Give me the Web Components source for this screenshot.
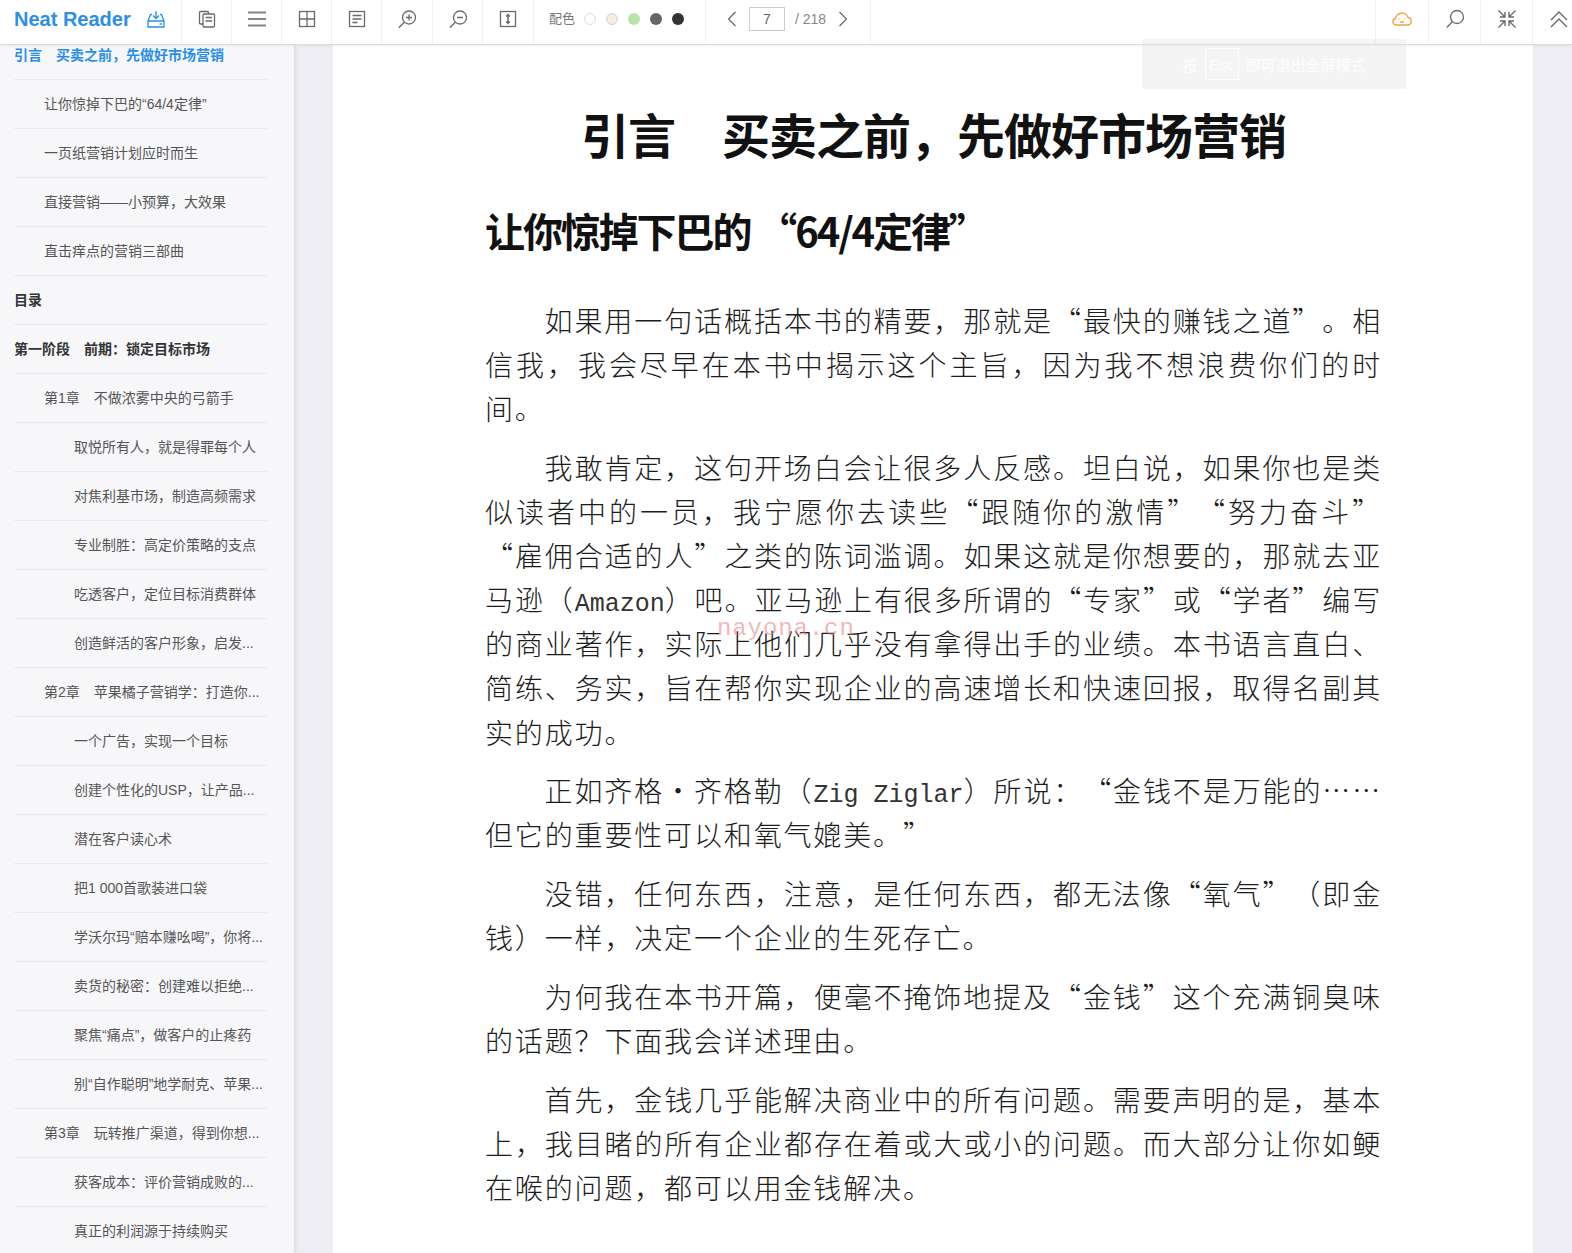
<!DOCTYPE html>
<html lang="zh-CN">
<head>
<meta charset="utf-8">
<title>Neat Reader</title>
<style>
  html, body { margin: 0; height: 100%; overflow: hidden; background: #eeedf3; }
</style>
</head>
<body>
<reader-app>
  <reader-toolbar slot="toolbar"></reader-toolbar>
  <toc-panel slot="toc">
    <toc-item level="0" state="active">引言　买卖之前，先做好市场营销</toc-item>
    <toc-item level="1">让你惊掉下巴的“64/4定律”</toc-item>
    <toc-item level="1">一页纸营销计划应时而生</toc-item>
    <toc-item level="1">直接营销——小预算，大效果</toc-item>
    <toc-item level="1">直击痒点的营销三部曲</toc-item>
    <toc-item level="0" state="bold">目录</toc-item>
    <toc-item level="0" state="bold">第一阶段　前期：锁定目标市场</toc-item>
    <toc-item level="1">第1章　不做浓雾中央的弓箭手</toc-item>
    <toc-item level="2">取悦所有人，就是得罪每个人</toc-item>
    <toc-item level="2">对焦利基市场，制造高频需求</toc-item>
    <toc-item level="2">专业制胜：高定价策略的支点</toc-item>
    <toc-item level="2">吃透客户，定位目标消费群体</toc-item>
    <toc-item level="2">创造鲜活的客户形象，启发...</toc-item>
    <toc-item level="1">第2章　苹果橘子营销学：打造你...</toc-item>
    <toc-item level="2">一个广告，实现一个目标</toc-item>
    <toc-item level="2">创建个性化的USP，让产品...</toc-item>
    <toc-item level="2">潜在客户读心术</toc-item>
    <toc-item level="2">把1 000首歌装进口袋</toc-item>
    <toc-item level="2">学沃尔玛“赔本赚吆喝”，你将...</toc-item>
    <toc-item level="2">卖货的秘密：创建难以拒绝...</toc-item>
    <toc-item level="2">聚焦“痛点”，做客户的止疼药</toc-item>
    <toc-item level="2">别“自作聪明”地学耐克、苹果...</toc-item>
    <toc-item level="1">第3章　玩转推广渠道，得到你想...</toc-item>
    <toc-item level="2">获客成本：评价营销成败的...</toc-item>
    <toc-item level="2">真正的利润源于持续购买</toc-item>
  </toc-panel>
  <book-page slot="page">
    <h-title slot="title">引言　买卖之前，先做好市场营销</h-title>
    <h-sub slot="title">让你惊掉下巴的 “64/4定律”</h-sub>
    <book-para>如果用一句话概括本书的精要，那就是“最快的赚钱之道”。相信我，我会尽早在本书中揭示这个主旨，因为我不想浪费你们的时间。</book-para>
    <book-para>我敢肯定，这句开场白会让很多人反感。坦白说，如果你也是类似读者中的一员，我宁愿你去读些“跟随你的激情”“努力奋斗”“雇佣合适的人”之类的陈词滥调。如果这就是你想要的，那就去亚马逊（<span class="en">Amazon</span>）吧。亚马逊上有很多所谓的“专家”或“学者”编写的商业著作，实际上他们几乎没有拿得出手的业绩。本书语言直白、简练、务实，旨在帮你实现企业的高速增长和快速回报，取得名副其实的成功。</book-para>
    <book-para>正如齐格·齐格勒（<span class="en">Zig Ziglar</span>）所说：“金钱不是万能的……但它的重要性可以和氧气媲美。”</book-para>
    <book-para>没错，任何东西，注意，是任何东西，都无法像“氧气”（即金钱）一样，决定一个企业的生死存亡。</book-para>
    <book-para>为何我在本书开篇，便毫不掩饰地提及“金钱”这个充满铜臭味的话题？下面我会详述理由。</book-para>
    <book-para>首先，金钱几乎能解决商业中的所有问题。需要声明的是，基本上，我目睹的所有企业都存在着或大或小的问题。而大部分让你如鲠在喉的问题，都可以用金钱解决。</book-para>
  </book-page>
  <esc-hint slot="overlay"></esc-hint>
</reader-app>

<script>
const ICONS = {
  copy: '<rect x="2.500" y="2.500" width="9" height="12.500" rx="1"/><rect x="6" y="5" width="11.500" height="13" rx="1" fill="#fff"/><path d="M8.500 8.500h6.500M8.500 12h6.500"/>',
  menu: '<path d="M1 3.500h18M1 10h18M1 16.500h18" stroke="#858585" stroke-width="2"/>',
  grid: '<rect x="2.500" y="2.500" width="15" height="15"/><path d="M10 2.500v15M2.500 10h15"/>',
  notes: '<rect x="2.500" y="2.500" width="15" height="15"/><path d="M5.500 6.500h9M5.500 10h9M5.500 13.500h5"/>',
  zoomIn: '<circle cx="12" cy="8.500" r="6.500"/><path d="M7.300 13.200 1.800 18.800M9 8.500h6M12 5.500v6"/>',
  zoomOut: '<circle cx="12" cy="8.500" r="6.500"/><path d="M7.300 13.200 1.800 18.800M9 8.500h6"/>',
  fit: '<rect x="2.500" y="2.500" width="15" height="15"/><path d="M10 5.500v9M8.200 7.500 10 5.500l1.800 2M8.200 12.500l1.800 2 1.800-2" stroke-width="1.500"/>',
  search: '<circle cx="12" cy="8" r="6.500"/><path d="M7.300 12.800 1.800 18.500"/>',
  compress: '<path d="M8 3v5H3M1.500 1.500 8 8M12 3v5h5M18.500 1.500 12 8M8 17v-5H3M1.500 18.500 8 12M12 17v-5h5M18.500 18.500 12 12" stroke-width="1.400"/>',
  doubleUp: '<path d="M2 11 10 3l8 8M2 18l8-8 8 8" stroke-width="1.400"/>'
};

function svgIcon(name) {
  return `<svg width="20" height="20" viewBox="0 0 20 20" fill="none" stroke="#6a6a6a" stroke-width="1.300">${ICONS[name]}</svg>`;
}

class ReaderApp extends HTMLElement {
  constructor() {
    super();
    this.attachShadow({ mode: 'open' });
    this.shadowRoot.innerHTML = `
      <style>
        :host {
          display: grid;
          grid-template-rows: 45px 1fr;
          grid-template-columns: 295px 1fr;
          height: 1253px;
          overflow: hidden;
          position: relative;
          background: #eeedf3;
        }
        .top { grid-column: 1 / 3; position: relative; z-index: 2; }
        .main { overflow: hidden; padding: 0 39px 0 38px; }
        .left { overflow: hidden; position: relative; z-index: 1; padding-right: 5px; margin-right: -5px; }
      </style>
      <div class="top"><slot name="toolbar"></slot></div>
      <div class="left"><slot name="toc"></slot></div>
      <div class="main"><slot name="page"></slot></div>
      <slot name="overlay"></slot>
    `;
  }
}

class ReaderToolbar extends HTMLElement {
  constructor() {
    super();
    this.attachShadow({ mode: 'open' });
    const cell = (name, w) => `<div class="cell" style="width:${w}px">${svgIcon(name)}</div>`;
    this.shadowRoot.innerHTML = `
      <style>
        :host {
          display: flex;
          height: 45px;
          box-sizing: border-box;
          background: #fff;
          border-bottom: 1px solid #dcdcdc;
          box-shadow: 0 1px 2px rgba(0, 0, 0, 0.06);
          font-family: "Liberation Sans", "Noto Sans CJK SC", sans-serif;
        }
        .cell {
          display: flex;
          align-items: center;
          justify-content: center;
          height: 44px;
          padding-bottom: 6px;
          box-sizing: border-box;
          border-right: 1px solid #f1f1f1;
          flex: none;
        }
        .logo {
          width: 182px;
          gap: 16px;
          justify-content: flex-start;
          padding-left: 14px;
        }
        .logo b { font-size: 20px; color: #2b8fe8; white-space: nowrap; }
        .palette {
          width: 172px;
          padding-left: 15px;
          justify-content: flex-start;
          gap: 9px;
          font-size: 13px;
          color: #777;
        }
        .palette > span { margin-bottom: 3px; }
        .dot { width: 12px; height: 12px; border-radius: 50%; box-sizing: border-box; flex: none; }
        .dots { display: flex; gap: 10px; }
        .pager {
          width: 165px;
          padding-left: 21px;
          justify-content: flex-start;
          font-size: 14px;
          color: #888;
        }
        .pager .num {
          width: 36px;
          height: 24px;
          border: 1px solid #ccc;
          box-sizing: border-box;
          color: #666;
          display: flex;
          align-items: center;
          justify-content: center;
          margin: 0 10px 0 12px;
        }
        .spacer { flex: 1; border-right: 1px solid #f1f1f1; }
        .last { border-right: 0; justify-content: flex-start; padding-left: 16px; }
      </style>
      <div class="cell logo">
        <b>Neat Reader</b>
        <svg width="18" height="18" viewBox="0 0 18 18" fill="none" stroke="#2b8fe8" stroke-width="1.300">
          <path d="M5 4.500H3.500L1 11v6h16v-6l-2.500-6.500H13M1 11h16M9 1v7.500M6 5.500l3 3 3-3M12.500 14h2.500"/>
        </svg>
      </div>
      ${cell('copy', 50)}${cell('menu', 50)}${cell('grid', 50)}${cell('notes', 50)}${cell('zoomIn', 51)}${cell('zoomOut', 50)}${cell('fit', 51)}
      <div class="cell palette">
        <span>配色</span>
        <div class="dots">
          <i class="dot" style="background:#fff;border:1px solid #ddd"></i>
          <i class="dot" style="background:#f4eee4;border:1px solid #d5d0c8"></i>
          <i class="dot" style="background:#b9e4a8"></i>
          <i class="dot" style="background:#666"></i>
          <i class="dot" style="background:#333"></i>
        </div>
      </div>
      <div class="cell pager">
        <svg width="10" height="16" viewBox="0 0 10 16" fill="none" stroke="#666" stroke-width="1.200"><path d="M8.500 1 1.500 8l7 7"/></svg>
        <span class="num">7</span>
        <span>/ 218</span>
        <svg style="margin-left:12px" width="10" height="16" viewBox="0 0 10 16" fill="none" stroke="#666" stroke-width="1.200"><path d="M1.500 1l7 7-7 7"/></svg>
      </div>
      <div class="spacer"></div>
      <div class="cell" style="width:53px">
        <svg width="20" height="14" viewBox="0 0 20 14" fill="none" stroke="#f0a33c" stroke-width="1.300">
          <path d="M5 13H4a3.300 3.300 0 0 1-.5-6.500A6.500 6.500 0 0 1 16 5.500 3.800 3.800 0 0 1 16 13z"/>
          <path d="M7 6.500v1M13 6.500v1M8 10h4"/>
        </svg>
      </div>
      ${cell('search', 52)}${cell('compress', 52)}
      <div class="cell last" style="width:39px">${svgIcon('doubleUp')}</div>
    `;
  }
}

class TocPanel extends HTMLElement {
  constructor() {
    super();
    this.attachShadow({ mode: 'open' });
    this.shadowRoot.innerHTML = `
      <style>
        :host {
          display: block;
          height: 100%;
          width: 294px;
          background: #f7f7fa;
          box-shadow: 2px 0 3px rgba(0, 0, 0, 0.08);
          box-sizing: border-box;
          overflow: hidden;
          padding: 0 27px 0 14px;
        }
        .list { margin-top: -14px; }
      </style>
      <div class="list"><slot></slot></div>
    `;
  }
}

class TocItem extends HTMLElement {
  constructor() {
    super();
    this.attachShadow({ mode: 'open' });
    this.shadowRoot.innerHTML = `
      <style>
        :host {
          display: flex;
          align-items: center;
          height: 49px;
          box-sizing: border-box;
          padding-bottom: 2px;
          border-bottom: 1px solid #e9e9ee;
          font: 14px "Liberation Sans", "Noto Sans CJK SC", sans-serif;
          color: #555;
          white-space: nowrap;
          overflow: hidden;
        }
        :host([level="1"]) { padding-left: 30px; }
        :host([level="2"]) { padding-left: 60px; }
        :host([state="bold"]) { font-weight: 700; color: #333; }
        :host([state="active"]) { font-weight: 700; color: #2b8fe8; }
      </style>
      <slot></slot>
    `;
  }
}

class BookPage extends HTMLElement {
  constructor() {
    super();
    this.attachShadow({ mode: 'open' });
    this.shadowRoot.innerHTML = `
      <style>
        :host {
          display: block;
          position: relative;
          background: #fff;
          height: 100%;
          box-sizing: border-box;
          padding: 53px 151px 0 152px;
        }
        .mark {
          position: absolute;
          left: 384px;
          top: 570px;
          font: 24px "Liberation Mono", monospace;
          letter-spacing: 0.900px;
          color: rgba(232, 120, 120, 0.55);
        }
      </style>
      <slot name="title"></slot>
      <slot></slot>
      <div class="mark">nayona.cn</div>
    `;
  }
}

class HTitle extends HTMLElement {
  constructor() {
    super();
    this.attachShadow({ mode: 'open' });
    this.shadowRoot.innerHTML = `
      <style>
        :host {
          display: block;
          text-align: center;
          font: 700 48px/70px "Noto Sans CJK SC", sans-serif;
          letter-spacing: -1px;
          color: #111;
          white-space: nowrap;
        }
      </style>
      <slot></slot>
    `;
  }
}

class HSub extends HTMLElement {
  constructor() {
    super();
    this.attachShadow({ mode: 'open' });
    this.shadowRoot.innerHTML = `
      <style>
        :host {
          display: block;
          margin: 37px 0 43px;
          font: 700 40px/50px "Noto Sans CJK SC", sans-serif;
          letter-spacing: -2.100px;
          text-spacing-trim: space-all;
          color: #111;
          white-space: nowrap;
        }
      </style>
      <slot></slot>
    `;
  }
}

class BookPara extends HTMLElement {
  constructor() {
    super();
    this.attachShadow({ mode: 'open' });
    this.shadowRoot.innerHTML = `
      <style>
        :host {
          display: block;
          margin-bottom: 14.700px;
          font: 300 28px/44.100px "Noto Sans CJK SC", sans-serif;
          letter-spacing: 1.850px;
          text-indent: 59.500px;
          text-align: justify;
          text-spacing-trim: space-all;
          color: #1c1c1c;
        }
        ::slotted(.en) {
          font-family: "Liberation Mono", monospace;
          font-size: 25px;
          line-height: 0;
          letter-spacing: 0;
          color: #333;
        }
      </style>
      <slot></slot>
    `;
  }
}

class EscHint extends HTMLElement {
  constructor() {
    super();
    this.attachShadow({ mode: 'open' });
    this.shadowRoot.innerHTML = `
      <style>
        :host {
          position: absolute;
          z-index: 3;
          left: 1142px;
          top: 39px;
          width: 264px;
          height: 50px;
          display: flex;
          align-items: center;
          justify-content: center;
          gap: 7px;
          background: rgba(225, 225, 225, 0.38);
          color: rgba(255, 255, 255, 0.9);
          font: 15px "Liberation Sans", "Noto Sans CJK SC", sans-serif;
        }
        .key {
          border: 1px solid rgba(255, 255, 255, 0.9);
          width: 34px;
          height: 32px;
          display: flex;
          align-items: center;
          justify-content: center;
          box-sizing: border-box;
        }
      </style>
      <span>按</span><span class="key">Esc</span><span>即可退出全屏模式</span>
    `;
  }
}

customElements.define('reader-app', ReaderApp);
customElements.define('reader-toolbar', ReaderToolbar);
customElements.define('toc-panel', TocPanel);
customElements.define('toc-item', TocItem);
customElements.define('book-page', BookPage);
customElements.define('h-title', HTitle);
customElements.define('h-sub', HSub);
customElements.define('book-para', BookPara);
customElements.define('esc-hint', EscHint);
</script>
</body>
</html>
